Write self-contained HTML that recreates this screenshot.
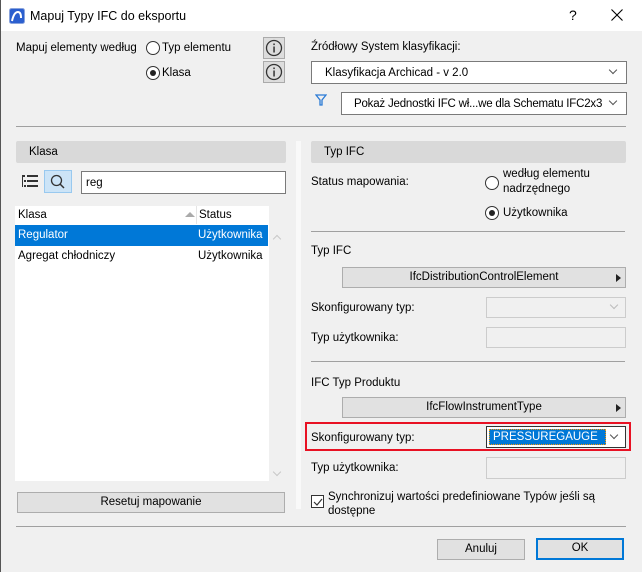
<!DOCTYPE html>
<html><head><meta charset="utf-8"><style>
*{box-sizing:border-box;margin:0;padding:0}
body{width:642px;height:572px;background:#f0f0f0;font-family:"Liberation Sans",sans-serif;font-size:11.5px;color:#000;position:relative;overflow:hidden}
.a{position:absolute;white-space:nowrap}
.t{position:absolute;white-space:nowrap;line-height:14px}
.hr{position:absolute;height:1px;background:#a0a0a0}
.box{position:absolute;background:#fff;border:1px solid #7a7a7a}
.btn{position:absolute;background:#e1e1e1;border:1px solid #adadad;text-align:center;line-height:18px}
.rad{position:absolute;width:14px;height:14px;border:1px solid #333;border-radius:50%;background:#fff}
.rad.on::after{content:"";position:absolute;left:3px;top:3px;width:6px;height:6px;border-radius:50%;background:#222}
.chev{position:absolute;width:6px;height:6px;border-right:1px solid #555;border-bottom:1px solid #555;transform:rotate(45deg)}
.hdr{position:absolute;background:#d9d9d9;border-radius:2px;height:22px;line-height:22px;padding-left:13px}
.tri{position:absolute;width:0;height:0;border-left:5px solid #222;border-top:4px solid transparent;border-bottom:4px solid transparent}
.info{position:absolute;width:22px;height:22px;background:#ddd;border:1px solid #aaa}
</style></head><body>
<div class="a" style="left:0;top:0;width:642px;height:31px;background:#fff"></div>
<div class="a" style="left:0;top:0;width:1px;height:572px;background:#555"></div>
<svg class="a" style="left:9px;top:8px" width="16" height="16"><rect x="0.5" y="0.5" width="15" height="15" rx="2" fill="#2b5fcf" stroke="#8aa4dd"/><path d="M3 13 Q5 4 9 4 Q12 4 12 10" stroke="#fff" stroke-width="2" fill="none"/></svg>
<div class="t" style="left:30px;top:9px;font-size:12.5px">Mapuj Typy IFC do eksportu</div>
<div class="t" style="left:569px;top:8px;font-size:14px">?</div>
<svg class="a" style="left:611px;top:9px" width="12" height="12"><path d="M0.5 0.5L11.5 11.5M11.5 0.5L0.5 11.5" stroke="#000" stroke-width="1.1"/></svg>

<div class="a" style="left:16px;top:41px;width:121px;overflow:hidden;line-height:14px">Mapuj elementy według</div>
<div class="rad" style="left:146px;top:41px"></div><div class="t" style="left:162px;top:41px">Typ elementu</div>
<div class="rad on" style="left:146px;top:66px"></div><div class="t" style="left:162px;top:66px">Klasa</div>
<div class="info" style="left:263px;top:37px"><svg class="a" style="left:1px;top:1px" width="18" height="18"><circle cx="9" cy="9" r="7.5" fill="none" stroke="#333" stroke-width="1.3"/><rect x="8.3" y="7.5" width="1.5" height="6" fill="#333"/><rect x="8.3" y="4.5" width="1.5" height="1.6" fill="#333"/></svg></div>
<div class="info" style="left:263px;top:61px"><svg class="a" style="left:1px;top:1px" width="18" height="18"><circle cx="9" cy="9" r="7.5" fill="none" stroke="#333" stroke-width="1.3"/><rect x="8.3" y="7.5" width="1.5" height="6" fill="#333"/><rect x="8.3" y="4.5" width="1.5" height="1.6" fill="#333"/></svg></div>

<div class="t" style="left:311px;top:40px">Źródłowy System klasyfikacji:</div>
<div class="box" style="left:311px;top:61px;width:316px;height:23px"><div class="t" style="left:13px;top:4px">Klasyfikacja Archicad - v 2.0</div><div class="chev" style="left:298px;top:5px"></div></div>
<svg class="a" style="left:315px;top:94px" width="12" height="12"><path d="M1 1H11L7 6V11H5V6Z" fill="none" stroke="#2a7ad5" stroke-width="1.3"/></svg>
<div class="box" style="left:341px;top:92px;width:286px;height:23px;overflow:hidden"><div class="t" style="left:12px;top:4px;letter-spacing:-0.2px">Pokaż Jednostki IFC wł...we dla Schematu IFC2x3</div><div class="a" style="left:262px;top:0;width:22px;height:21px;background:#fff"></div><div class="chev" style="left:268px;top:5px"></div></div>

<div class="hr" style="left:16px;top:126px;width:610px"></div>

<div class="hdr" style="left:16px;top:141px;width:270px">Klasa</div>
<svg class="a" style="left:22px;top:175px" width="17" height="13"><g fill="#333"><rect x="0" y="0" width="3" height="2"/><rect x="5" y="0" width="11" height="2"/><rect x="2" y="5" width="2" height="2"/><rect x="5" y="5" width="11" height="2"/><rect x="2" y="10" width="2" height="2"/><rect x="5" y="10" width="11" height="2"/><rect x="0" y="2" width="1" height="10"/></g></svg>
<div class="a" style="left:44px;top:170px;width:28px;height:23px;background:#cce4f7;border:1px solid #99c9ef"></div>
<svg class="a" style="left:50px;top:174px" width="16" height="16"><circle cx="6.5" cy="6.5" r="5" fill="none" stroke="#333" stroke-width="1.3"/><path d="M10 10L14 14" stroke="#333" stroke-width="1.5"/></svg>
<div class="box" style="left:81px;top:171px;width:205px;height:23px"><div class="t" style="left:4px;top:4px">reg</div></div>

<div class="a" style="left:15px;top:206px;width:254px;height:275px;background:#fff"></div>
<div class="t" style="left:18px;top:208px">Klasa</div>
<div class="a" style="left:185px;top:212px;width:0;height:0;border-left:5px solid transparent;border-right:5px solid transparent;border-bottom:5px solid #aaa"></div>
<div class="a" style="left:196px;top:206px;width:1px;height:18px;background:#e5e5e5"></div>
<div class="t" style="left:199px;top:208px">Status</div>
<div class="a" style="left:15px;top:225px;width:253px;height:21px;background:#0078d7"></div>
<div class="t" style="left:18px;top:228px;color:#fff">Regulator</div>
<div class="t" style="left:198px;top:228px;color:#fff">Użytkownika</div>
<div class="t" style="left:18px;top:249px">Agregat chłodniczy</div>
<div class="t" style="left:198px;top:249px">Użytkownika</div>
<div class="chev" style="left:274px;top:236px;transform:rotate(225deg);border-color:#c8c8c8"></div>
<div class="chev" style="left:274px;top:469px;border-color:#c8c8c8"></div>
<div class="btn" style="left:17px;top:492px;width:268px;height:21px">Resetuj mapowanie</div>
<div class="a" style="left:296px;top:141px;width:5px;height:368px;background:#f9f9f9"></div>

<div class="hdr" style="left:311px;top:141px;width:315px">Typ IFC</div>
<div class="t" style="left:311px;top:175px">Status mapowania:</div>
<div class="rad" style="left:485px;top:176px"></div>
<div class="t" style="left:503px;top:167px">według elementu</div>
<div class="t" style="left:503px;top:182px">nadrzędnego</div>
<div class="rad on" style="left:485px;top:206px"></div><div class="t" style="left:503px;top:206px">Użytkownika</div>
<div class="hr" style="left:311px;top:231px;width:314px"></div>
<div class="t" style="left:311px;top:244px">Typ IFC</div>
<div class="btn" style="left:342px;top:267px;width:284px;height:21px">IfcDistributionControlElement</div>
<div class="tri" style="left:616px;top:274px"></div>
<div class="t" style="left:311px;top:301px">Skonfigurowany typ:</div>
<div class="a" style="left:486px;top:297px;width:140px;height:21px;border:1px solid #ccc;background:#f0f0f0"><div class="chev" style="left:124px;top:4px;border-color:#bbb"></div></div>
<div class="t" style="left:311px;top:331px">Typ użytkownika:</div>
<div class="a" style="left:486px;top:327px;width:140px;height:21px;border:1px solid #ccc"></div>
<div class="hr" style="left:311px;top:361px;width:314px"></div>
<div class="t" style="left:311px;top:376px">IFC Typ Produktu</div>
<div class="btn" style="left:342px;top:397px;width:284px;height:21px">IfcFlowInstrumentType</div>
<div class="tri" style="left:616px;top:404px"></div>
<div class="a" style="left:305px;top:422px;width:326px;height:29px;border:2px solid #e81123"></div>
<div class="t" style="left:311px;top:431px">Skonfigurowany typ:</div>
<div class="box" style="left:486px;top:426px;width:140px;height:22px;border-color:#333"><div class="a" style="left:2px;top:2px;width:117px;height:16px;background:#0078d7;border:1px dotted #f90"></div><div class="t" style="left:6px;top:3px;color:#fff">PRESSUREGAUGE</div><div class="chev" style="left:124px;top:5px"></div></div>
<div class="t" style="left:311px;top:461px">Typ użytkownika:</div>
<div class="a" style="left:486px;top:457px;width:140px;height:22px;border:1px solid #ccc"></div>
<div class="a" style="left:311px;top:495px;width:13px;height:13px;border:1px solid #333;background:#fff"></div>
<svg class="a" style="left:312px;top:496px" width="12" height="12"><path d="M2 6L5 9L10 3" stroke="#333" stroke-width="1.2" fill="none"/></svg>
<div class="t" style="left:328px;top:490px">Synchronizuj wartości predefiniowane Typów jeśli są</div>
<div class="t" style="left:328px;top:504px">dostępne</div>

<div class="hr" style="left:16px;top:526px;width:610px"></div>
<div class="btn" style="left:437px;top:539px;width:88px;height:21px">Anuluj</div>
<div class="a" style="left:536px;top:538px;width:88px;height:22px;background:#e1e1e1;border:2px solid #0078d7;text-align:center;line-height:17px">OK</div>
</body></html>
